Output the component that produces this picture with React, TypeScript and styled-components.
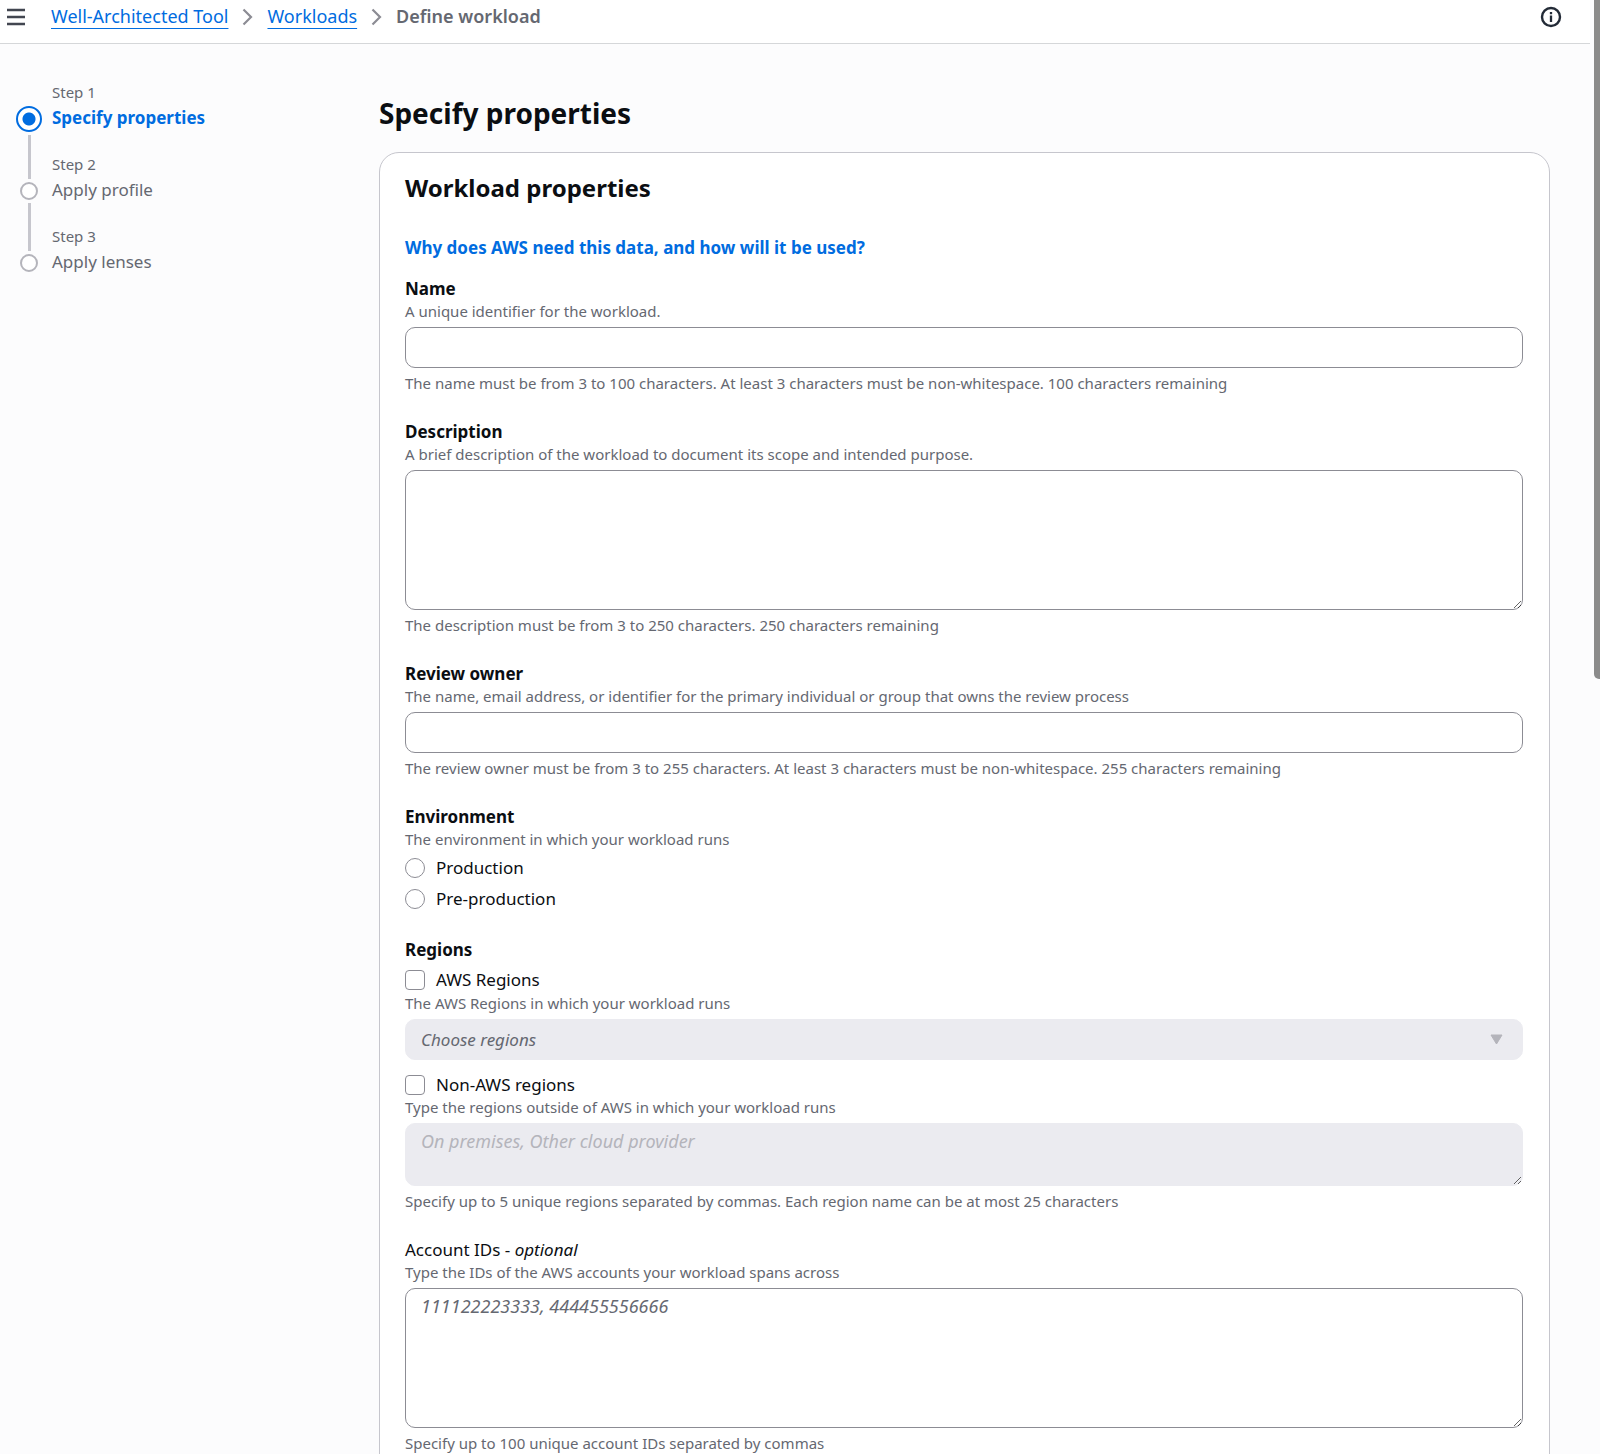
import React, { useId } from 'react';
import styled, { createGlobalStyle, css } from 'styled-components';

const color = {
  text: '#0b0e12',
  secondary: '#656871',
  link: '#006ce0',
  border: '#8c8c94',
  divider: '#d5d7d9',
  cardBorder: '#c6c6cd',
  disabledBg: '#ebebf0',
  disabledText: '#b4b4bb',
  page: '#fcfcfd',
};

const GlobalStyle = createGlobalStyle`
  *, *::before, *::after { box-sizing: border-box; }
  body {
    margin: 0;
    background: ${color.page};
    color: ${color.text};
    font: 17px/25px "Noto Sans", "Open Sans", sans-serif;
  }
  input, textarea, select, button { font: inherit; color: inherit; }
`;

const Shell = styled.div`
  height: 100vh;
  overflow: hidden;
  display: flex;
  flex-direction: column;
  padding-right: 10px;
`;

const TopBar = styled.header`
  flex: none;
  display: flex;
  align-items: center;
  height: 44px;
  padding: 0 28px 10px 4px;
  background: #fff;
  border-bottom: 1px solid ${color.divider};
`;

const IconButton = styled.button`
  display: flex;
  padding: 0;
  border: 0;
  background: none;
  color: #424650;
`;

const Crumbs = styled.ol`
  flex: 1;
  display: flex;
  align-items: center;
  gap: 13px;
  margin: 0;
  padding: 0 0 0 23px;
  list-style: none;
  font-size: 18px;
`;

const Crumb = styled.li`
  display: flex;
  align-items: center;
  gap: 13px;
  color: ${color.secondary};
`;

const CrumbLink = styled.a`
  color: ${color.link};
  text-decoration: underline;
  text-decoration-thickness: 1px;
  text-underline-offset: 5px;
`;

const Current = styled.span`
  font-weight: 600;
`;

const Layout = styled.div`
  flex: 1;
  display: grid;
  grid-template-columns: 363px minmax(0, 1fr);
  padding: 38px 40px 0 16px;
  min-height: 0;
`;

const StepList = styled.ol`
  margin: 0;
  padding: 0;
  list-style: none;
`;

const Step = styled.li`
  display: flex;
  gap: 10px;
  height: 72px;
`;

const Rail = styled.div`
  display: flex;
  flex-direction: column;
  align-items: center;
  gap: 3px;
  width: 26px;
`;

const RailLine = styled.span<{ $top?: boolean; $hidden?: boolean; $active?: boolean }>`
  width: 3px;
  background: ${(p) => (p.$hidden ? 'transparent' : '#c6c6cd')};
  ${(p) => (p.$top ? css`flex: none; height: ${p.$active ? 21 : 25}px;` : css`flex: 1;`)}
`;

const Marker = styled.span<{ $active?: boolean }>`
  flex: none;
  border-radius: 50%;
  ${(p) =>
    p.$active
      ? css`
          width: 26px;
          height: 26px;
          border: 2px solid ${color.link};
          background: radial-gradient(circle, ${color.link} 6px, #fff 7px);
        `
      : css`
          width: 18px;
          height: 18px;
          border: 2px solid ${color.disabledText};
          background: #fff;
        `}
`;

const StepText = styled.div`
  display: flex;
  flex-direction: column;
  gap: 2px;
`;

const StepNumber = styled.span`
  font-size: 15px;
  line-height: 21px;
  color: ${color.secondary};
`;

const StepTitle = styled.a<{ $active?: boolean }>`
  text-decoration: none;
  color: ${(p) => (p.$active ? color.link : color.secondary)};
  font-weight: ${(p) => (p.$active ? 700 : 400)};
`;

const Main = styled.main`
  min-width: 0;
`;

const PageTitle = styled.h1`
  margin: 11px 0 19px;
  font-size: 28px;
  line-height: 40px;
  font-weight: 700;
`;

const Card = styled.section`
  padding: 20px 26px 26px 25px;
  background: #fff;
  border: 1px solid ${color.cardBorder};
  border-radius: 20px;
`;

const CardTitle = styled.h2`
  margin: 0;
  font-size: 24px;
  line-height: 30px;
  font-weight: 700;
`;

const WhyLink = styled.a`
  display: block;
  margin: 32px 0 16px;
  color: ${color.link};
  font-weight: 700;
  text-decoration: none;
`;

const Form = styled.form`
  display: flex;
  flex-direction: column;
  gap: 25px;
`;

const FieldBox = styled.div`
  display: flex;
  flex-direction: column;
`;

const Group = styled.fieldset`
  display: flex;
  flex-direction: column;
  min-width: 0;
  margin: 0;
  padding: 0;
  border: 0;
`;

const labelText = css<{ $light?: boolean }>`
  padding: 0;
  font-weight: ${(p) => (p.$light ? 400 : 700)};
`;

const Label = styled.label<{ $light?: boolean }>`
  ${labelText}
`;

const Legend = styled.legend<{ $light?: boolean }>`
  ${labelText}
`;

const Hint = styled.span`
  font-size: 15px;
  line-height: 21px;
  color: ${color.secondary};
`;

const controlBox = css`
  display: block;
  width: 100%;
  margin: 5px 0;
  padding: 5px 15px;
  background: #fff;
  border: 1px solid ${color.border};
  border-radius: 10px;

  &::placeholder {
    color: ${color.secondary};
    font-style: italic;
    opacity: 1;
  }
  &:disabled {
    background: ${color.disabledBg};
    border-color: ${color.disabledBg};
    opacity: 1;
  }
  &:disabled::placeholder {
    color: ${color.disabledText};
  }
`;

const TextInput = styled.input`
  ${controlBox}
  height: 41px;
`;

const TextArea = styled.textarea<{ $short?: boolean }>`
  ${controlBox}
  height: ${(p) => (p.$short ? 63 : 140)}px;
  font-size: 18px;
  resize: vertical;
`;

const SelectWrap = styled.div`
  position: relative;
  margin-bottom: 7px;
`;

const Select = styled.select`
  ${controlBox}
  height: 41px;
  appearance: none;
  font-style: italic;
  color: ${color.secondary};
`;

const Caret = styled.svg`
  position: absolute;
  right: 20px;
  top: 20px;
  pointer-events: none;
`;

const Choices = styled.div`
  display: flex;
  flex-direction: column;
  gap: 6px;
  padding: 5px 0 1px;
`;

const Choice = styled.label`
  display: flex;
  align-items: center;
  gap: 11px;
`;

const ChoiceBox = styled.input`
  appearance: none;
  flex: none;
  width: 20px;
  height: 20px;
  margin: 0;
  background: #fff;
  border: 1px solid ${color.border};
  border-radius: ${(p) => (p.type === 'radio' ? '50%' : '4px')};
`;

const ScrollThumb = styled.div`
  position: fixed;
  top: 0;
  right: 0;
  width: 6px;
  height: 46.7vh;
  background: #8b8b8b;
  border-bottom-left-radius: 5px;
`;

const Chevron = () => (
  <svg width="13" height="18" viewBox="0 0 13 18" fill="none" stroke="#8c8c94" strokeWidth="2.2" aria-hidden="true">
    <path d="M2.5 1.5 10 9l-7.5 7.5" />
  </svg>
);

const steps = ['Specify properties', 'Apply profile', 'Apply lenses'];

type FieldProps = {
  label: React.ReactNode;
  light?: boolean;
  hint: string;
  note: string;
  multiline?: boolean;
  placeholder?: string;
};

function Field({ label, light, hint, note, multiline, placeholder }: FieldProps) {
  const id = useId();
  return (
    <FieldBox>
      <Label htmlFor={id} $light={light}>{label}</Label>
      <Hint>{hint}</Hint>
      {multiline ? <TextArea id={id} placeholder={placeholder} /> : <TextInput id={id} type="text" />}
      <Hint>{note}</Hint>
    </FieldBox>
  );
}

export default function App() {
  return (
    <>
      <GlobalStyle />
      <Shell>
        <TopBar>
          <IconButton type="button" aria-label="Open navigation">
            <svg width="24" height="24" viewBox="0 0 24 24" fill="none" stroke="currentColor" strokeWidth="2.4" aria-hidden="true">
              <path d="M3 5h18M3 12h18M3 19h18" />
            </svg>
          </IconButton>
          <Crumbs>
            <Crumb><CrumbLink href="#tool">Well-Architected Tool</CrumbLink><Chevron /></Crumb>
            <Crumb><CrumbLink href="#workloads">Workloads</CrumbLink><Chevron /></Crumb>
            <Crumb><Current aria-current="page">Define workload</Current></Crumb>
          </Crumbs>
          <IconButton type="button" aria-label="Info">
            <svg width="22" height="22" viewBox="0 0 22 22" fill="none" stroke="#232b37" aria-hidden="true">
              <circle cx="11" cy="11" r="9" strokeWidth="2.4" />
              <path d="M11 6v2.3M11 9.5v6.5" strokeWidth="2.3" />
            </svg>
          </IconButton>
        </TopBar>
        <Layout>
          <nav aria-label="Steps">
            <StepList>
              {steps.map((title, i) => (
                <Step key={title}>
                  <Rail>
                    <RailLine $top $hidden={i === 0} $active={i === 0} />
                    <Marker $active={i === 0} />
                    <RailLine $hidden={i === steps.length - 1} />
                  </Rail>
                  <StepText>
                    <StepNumber>Step {i + 1}</StepNumber>
                    <StepTitle href={`#step-${i + 1}`} $active={i === 0}>{title}</StepTitle>
                  </StepText>
                </Step>
              ))}
            </StepList>
          </nav>
          <Main>
            <PageTitle>Specify properties</PageTitle>
            <Card>
              <CardTitle>Workload properties</CardTitle>
              <WhyLink href="#why">Why does AWS need this data, and how will it be used?</WhyLink>
              <Form>
                <Field
                  label="Name"
                  hint="A unique identifier for the workload."
                  note="The name must be from 3 to 100 characters. At least 3 characters must be non-whitespace. 100 characters remaining"
                />
                <Field
                  label="Description"
                  multiline
                  hint="A brief description of the workload to document its scope and intended purpose."
                  note="The description must be from 3 to 250 characters. 250 characters remaining"
                />
                <Field
                  label="Review owner"
                  hint="The name, email address, or identifier for the primary individual or group that owns the review process"
                  note="The review owner must be from 3 to 255 characters. At least 3 characters must be non-whitespace. 255 characters remaining"
                />
                <Group>
                  <Legend>Environment</Legend>
                  <Hint>The environment in which your workload runs</Hint>
                  <Choices>
                    <Choice><ChoiceBox type="radio" name="environment" />Production</Choice>
                    <Choice><ChoiceBox type="radio" name="environment" />Pre-production</Choice>
                  </Choices>
                </Group>
                <Group>
                  <Legend>Regions</Legend>
                  <Choices>
                    <Choice><ChoiceBox type="checkbox" />AWS Regions</Choice>
                  </Choices>
                  <Hint id="aws-hint">The AWS Regions in which your workload runs</Hint>
                  <SelectWrap>
                    <Select disabled aria-labelledby="aws-hint">
                      <option>Choose regions</option>
                    </Select>
                    <Caret width="13" height="11" viewBox="0 0 13 11" fill={color.disabledText} stroke={color.disabledText} strokeLinejoin="round" aria-hidden="true">
                      <path d="M1 1h11L6.5 10z" />
                    </Caret>
                  </SelectWrap>
                  <Choice><ChoiceBox type="checkbox" />Non-AWS regions</Choice>
                  <Hint id="other-hint">Type the regions outside of AWS in which your workload runs</Hint>
                  <TextArea $short disabled aria-labelledby="other-hint" placeholder="On premises, Other cloud provider" />
                  <Hint>Specify up to 5 unique regions separated by commas. Each region name can be at most 25 characters</Hint>
                </Group>
                <Field
                  label={<>Account IDs - <i>optional</i></>}
                  light
                  multiline
                  placeholder="111122223333, 444455556666"
                  hint="Type the IDs of the AWS accounts your workload spans across"
                  note="Specify up to 100 unique account IDs separated by commas"
                />
              </Form>
            </Card>
          </Main>
        </Layout>
      </Shell>
      <ScrollThumb aria-hidden="true" />
    </>
  );
}
